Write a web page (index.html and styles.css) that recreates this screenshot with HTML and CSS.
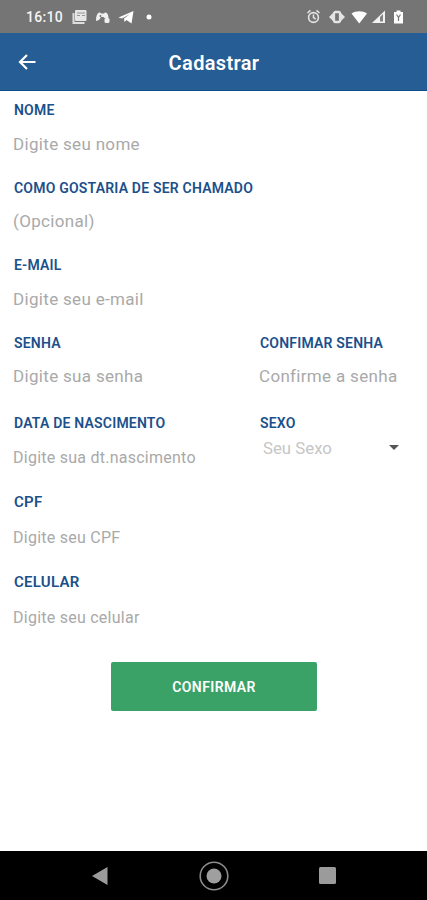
FILE: index.html
```html
<!DOCTYPE html>
<html lang="pt-BR">
  <head>
    <meta charset="UTF-8" />
    <meta name="viewport" content="width=device-width, initial-scale=1.0" />
    <title>Cadastrar</title>
    <link rel="stylesheet" href="styles.css">
  </head>
  <body>
    <div class="statusBar">
      <span class="clock">16:10</span>
      <svg class="notifications" width="82" height="16" viewBox="0 0 82 16">
        <!-- news -->
        <path d="M1.500 4v10h11" fill="none" stroke="#dedede" stroke-width="2" />
        <rect x="3" y="1" width="11.500" height="11" rx="1" fill="#e6e6e6" />
        <path d="M5 4h8M5 6.500h3M10 6.500h3" stroke="#959595" stroke-width="1.100" />
        <!-- game -->
        <path d="M24 12c0-5 1.500-9 4-8.500l1 1h3l1-1c2.500 0 3.500 2.500 3.500 5.500h-4l-1-1h-2.500l-2 3z" fill="#efefef" />
        <circle cx="28.500" cy="7" r="1" fill="#777" />
        <rect x="32.500" y="9" width="5" height="5" rx="1.500" fill="#efefef" />
        <!-- telegram -->
        <path d="M46.500 8.500 61.500 2 59.500 14.500l-5-3.500-2 2-.5-3.500 6-4.500-8 4.500z" fill="#fff" />
        <circle cx="77" cy="8" r="2.500" fill="#fff" />
      </svg>
      <svg class="system" width="98" height="16" viewBox="0 0 98 16">
        <!-- alarm -->
        <circle cx="6.500" cy="8.500" r="4.900" fill="none" stroke="#e4e4e4" stroke-width="1.600" />
        <path d="M.5 4 3.500 1.400M12.500 4 9.500 1.400M6.500 5.500v3.200l2.200 1.500" fill="none" stroke="#e4e4e4" stroke-width="1.500" />
        <!-- vibrate -->
        <path d="M22 8l4-4v8zM38 8l-4-4v8z" fill="#e4e4e4" />
        <rect x="27" y="3" width="6" height="10" rx="1.500" fill="none" stroke="#e4e4e4" stroke-width="2.300" />
        <!-- wifi -->
        <path d="M44.500 4.500c4.500-3 11-3 15.500 0L52.250 14.500z" fill="#fff" />
        <!-- signal -->
        <path d="M65 14 78 1.500V14z" fill="#f2f2f2" />
        <path d="M73 8v4.500h3V5z" fill="#838383" />
        <!-- battery -->
        <path d="M87 3h2.500V1.500h4V3H96v11.500h-9z" fill="#fff" />
        <path d="M89.500 5.500l2 3 2-3M91.500 8v4" fill="none" stroke="#777" stroke-width="1.200" />
      </svg>
    </div>

    <header class="header">
      <svg class="back" width="18" height="18" viewBox="0 0 18 18">
        <path d="M17.500 9H2.500M9 2 2 9l7 7" fill="none" stroke="#fff" stroke-width="2.200" />
      </svg>
      <h1>Cadastrar</h1>
    </header>

    <form class="form">
      <div class="row">
        <div class="field">
          <label for="nome">NOME</label>
          <input type="text" id="nome" placeholder="Digite seu nome" />
        </div>
      </div>
      <div class="row">
        <div class="field">
          <label for="apelido">COMO GOSTARIA DE SER CHAMADO</label>
          <input type="text" id="apelido" placeholder="(Opcional)" />
        </div>
      </div>
      <div class="row">
        <div class="field">
          <label for="email">E-MAIL</label>
          <input type="text" id="email" placeholder="Digite seu e-mail" />
        </div>
      </div>
      <div class="row row--senha">
        <div class="field">
          <label for="senha">SENHA</label>
          <input type="password" id="senha" placeholder="Digite sua senha" />
        </div>
        <div class="field">
          <label for="confirmar">CONFIMAR SENHA</label>
          <input type="password" id="confirmar" placeholder="Confirme a senha" />
        </div>
      </div>
      <div class="row row--masked">
        <div class="field">
          <label for="nascimento">DATA DE NASCIMENTO</label>
          <input type="text" id="nascimento" placeholder="Digite sua dt.nascimento" />
        </div>
        <div class="field">
          <label>SEXO</label>
          <div class="picker">
            <span>Seu Sexo</span>
            <svg width="10" height="5" viewBox="0 0 10 5">
              <path d="M0 0h10L5 5z" fill="#555" />
            </svg>
          </div>
        </div>
      </div>
      <div class="row row--masked">
        <div class="field field--large">
          <label for="cpf">CPF</label>
          <input type="text" id="cpf" placeholder="Digite seu CPF" />
        </div>
      </div>
      <div class="row row--masked">
        <div class="field field--large">
          <label for="celular">CELULAR</label>
          <input type="text" id="celular" placeholder="Digite seu celular" />
        </div>
      </div>
      <button type="button" class="confirm">CONFIRMAR</button>
    </form>

    <nav class="navBar">
      <svg width="16" height="18" viewBox="0 0 16 18">
        <path d="M0 9 15.500 0v18z" fill="#9b9b9b" />
      </svg>
      <svg width="30" height="30" viewBox="0 0 30 30">
        <circle cx="15" cy="15" r="13.800" fill="none" stroke="#8c8c8c" stroke-width="1.600" />
        <circle cx="15" cy="15" r="7.500" fill="#9f9f9f" />
      </svg>
      <svg width="17" height="17" viewBox="0 0 17 17">
        <rect width="17" height="17" rx="1.500" fill="#9b9b9b" />
      </svg>
    </nav>
  </body>
</html>
```

FILE: styles.css
```css
* {
  box-sizing: border-box;
}

body {
  display: flex;
  flex-direction: column;
  height: 900px;
  margin: 0;
  background-color: #ffffff;
  font-family: Roboto, sans-serif;
}

.statusBar {
  display: flex;
  align-items: center;
  height: 33px;
  padding: 0 22px 0 26px;
  background-color: #757575;
}

.clock {
  width: 46px;
  color: #f4f4f4;
  font-size: 14px;
  font-weight: 500;
  letter-spacing: 0.3px;
}

.system {
  margin-left: auto;
}

.header {
  display: grid;
  grid-template-columns: 1fr auto 1fr;
  align-items: center;
  height: 58px;
  padding: 1px 18px 0;
  background-color: #265d94;
  border-bottom: 1px solid #0d4f8c;
}

.header h1 {
  margin: 0;
  padding: 1px 0 0 1px;
  color: #ffffff;
  font-size: 20px;
  font-weight: 600;
  letter-spacing: 0.35px;
}

.form {
  display: flex;
  flex: 1;
  flex-direction: column;
  padding: 9px 14px 0;
}

.row {
  display: grid;
  grid-template-columns: 246px 1fr;
  height: 77.5px;
}

.row--senha {
  height: 80px;
}

.row--masked {
  height: 79.8px;
}

.field label {
  display: block;
  color: #1b508b;
  font-size: 14px;
  font-weight: 600;
  letter-spacing: 0.2px;
  line-height: 20px;
  white-space: nowrap;
}

.field--large label {
  font-size: 15px;
  letter-spacing: 0.25px;
}

.field input {
  display: block;
  width: 100%;
  height: 47px;
  margin-left: -1px;
  padding: 0;
  border: none;
  outline: none;
  background: none;
  color: #333333;
  font-family: Roboto, sans-serif;
  font-size: 17px;
  letter-spacing: 0.32px;
}

.field input::placeholder {
  color: #a9a9a9;
  opacity: 1;
}

.row--masked input {
  height: 50px;
  font-size: 16px;
  letter-spacing: 0.25px;
}

.picker {
  display: flex;
  align-items: center;
  justify-content: space-between;
  height: 30px;
  padding: 0 14px 0 3px;
  color: #c6c6c6;
  font-size: 16.8px;
}

.confirm {
  width: 206px;
  height: 49px;
  margin: 10px 0 0 97px;
  padding: 2px 0 0;
  border: none;
  border-radius: 2px;
  background-color: #3aa267;
  color: #ffffff;
  font-family: Roboto, sans-serif;
  font-size: 14px;
  font-weight: 600;
  letter-spacing: 0.4px;
}

.navBar {
  display: flex;
  align-items: center;
  justify-content: space-between;
  height: 49px;
  padding: 0 91px 0 92px;
  background-color: #000000;
}
```
